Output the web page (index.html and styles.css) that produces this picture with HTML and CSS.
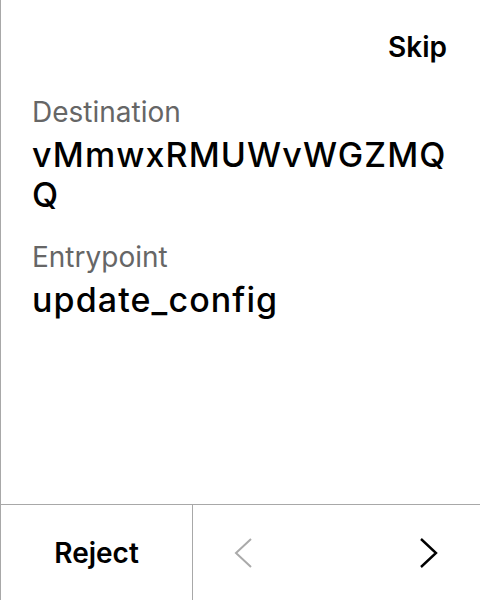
FILE: index.html
```html
<!DOCTYPE html>
<html>
<head>
<meta charset="utf-8">
<link rel="stylesheet" href="styles.css">
</head>
<body>
<div class="screen">
  <div class="header">
    <span class="skip">Skip</span>
  </div>
  <div class="content">
    <div class="field">
      <div class="label">Destination</div>
      <div class="value">vMmwxRMUWvWGZMQQ</div>
    </div>
    <div class="field">
      <div class="label">Entrypoint</div>
      <div class="value">update_config</div>
    </div>
  </div>
  <div class="footer">
    <div class="reject">Reject</div>
    <div class="nav">
      <svg class="chev" width="18" height="30" viewBox="0 0 18 30"><path d="M17 1 L2 15 L17 29" fill="none" stroke="#aaaaaa" stroke-width="2"/></svg>
      <svg class="chev" width="18" height="30" viewBox="0 0 18 30"><path d="M1 1 L16 15 L1 29" fill="none" stroke="#000000" stroke-width="2.4"/></svg>
    </div>
  </div>
</div>
</body>
</html>
```
FILE: styles.css
```css
html, body {
  margin: 0;
  padding: 0;
  background: #fff;
}
.screen {
  width: 480px;
  height: 600px;
  box-sizing: border-box;
  border-left: 1px solid #a8a8a8;
  display: flex;
  flex-direction: column;
  font-family: Inter, "Noto Sans", sans-serif;
  color: #000;
}
.header {
  display: flex;
  justify-content: flex-end;
  padding: 29px 33px 0 0;
}
.skip {
  font-size: 28px;
  font-weight: 600;
  line-height: 36px;
}
.content {
  flex: 1;
  padding: 29px 24px 0 31px;
  display: flex;
  flex-direction: column;
  gap: 24px;
}
.label {
  font-size: 28px;
  color: #666;
  line-height: 36px;
}
.value {
  font-size: 34px;
  font-weight: 500;
  line-height: 40px;
  letter-spacing: 1.1px;
  word-break: break-all;
  margin-top: 5px;
}
.footer {
  height: 96px;
  border-top: 1px solid #a8a8a8;
  display: flex;
  box-sizing: border-box;
}
.reject {
  width: 191px;
  border-right: 1px solid #a8a8a8;
  display: flex;
  align-items: center;
  justify-content: center;
  font-size: 28px;
  font-weight: 600;
}
.nav {
  flex: 1;
  display: flex;
  align-items: center;
  justify-content: space-between;
  padding: 0 42px 0 41px;
}
```
